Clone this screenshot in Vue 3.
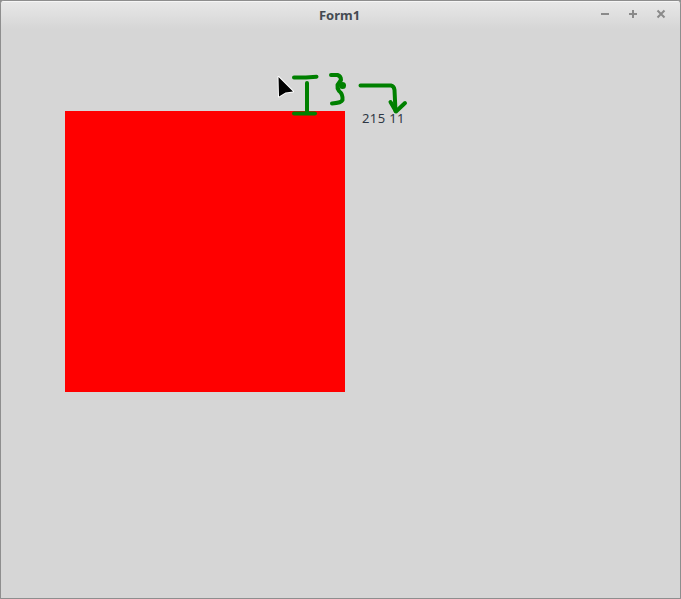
<script setup>
const title = 'Form1'
const coords = '215 11'
</script>

<template>
  <div class="window">
    <div class="titlebar">
      <span class="title">{{ title }}</span>
      <div class="controls">
        <svg class="ctl" viewBox="0 0 10 10"><path d="M1 5H9" /></svg>
        <svg class="ctl" viewBox="0 0 10 10"><path d="M1 5H9M5 1V9" /></svg>
        <svg class="ctl" viewBox="0 0 10 10"><path d="M1.5 1.5L8.5 8.5M8.5 1.5L1.5 8.5" /></svg>
      </div>
    </div>
    <div class="canvas">
      <div class="square"></div>
      <span class="coords">{{ coords }}</span>
      <svg class="marks" width="679" height="597" viewBox="1 1 679 597">
        <polygon class="cursor" points="278.5,77 293,91.5 285.5,92.5 279,96.5" />
        <g class="ink">
          <path d="M294 77.5L306 77.5L316.5 76.7" />
          <path d="M307 83V113" />
          <path d="M294 113.5H315" />
          <path d="M331 75H337.5Q341 76 341 80L337.5 85Q337 88 339 91Q343 94 342.5 100Q341 103 332 103.5" />
          <circle class="blob" cx="342.5" cy="85.5" r="3.5" />
          <path d="M360.5 85.5H391Q394 86 394.5 90L395.5 111" />
          <path d="M390.5 102L396 111.5L405 103" />
        </g>
      </svg>
    </div>
  </div>
</template>

<style>
html, body {
  margin: 0;
  background: #8f8f8f;
}
</style>

<style scoped>
.window {
  box-sizing: border-box;
  width: 681px;
  height: 599px;
  display: flex;
  flex-direction: column;
  border: 1px solid #8e8e8e;
  border-radius: 4px 4px 0 0;
  background: #d6d6d6;
  overflow: hidden;
  font-family: "Noto Sans", "Open Sans", sans-serif;
}

.titlebar {
  height: 28px;
  flex: none;
  display: flex;
  align-items: center;
  justify-content: center;
  position: relative;
  background: linear-gradient(#e8e8e8, #d6d6d6);
  box-shadow: inset 0 1px 0 #f6f6f6;
}

.title {
  font-size: 13px;
  font-weight: 700;
  color: #444a52;
  margin-right: 2px;
}

.controls {
  position: absolute;
  right: 14px;
  top: 8px;
  display: flex;
  gap: 18px;
}

.ctl {
  width: 10px;
  height: 10px;
  fill: none;
  stroke: #8a8a8a;
  stroke-width: 2;
}

.canvas {
  flex: 1;
  position: relative;
}

.square {
  width: 280px;
  height: 281px;
  margin: 82px 0 0 64px;
  background: #ff0000;
}

.coords {
  position: absolute;
  left: 361px;
  top: 81px;
  font-size: 13px;
  letter-spacing: 0.4px;
  line-height: 17px;
  color: #2f3744;
  white-space: nowrap;
}

.marks {
  position: absolute;
  left: 0;
  top: -28px;
}

.cursor {
  fill: #000;
  stroke: #fff;
  stroke-width: 2;
  paint-order: stroke;
  stroke-linejoin: round;
}

.ink {
  fill: none;
  stroke: #008000;
  stroke-width: 4;
  stroke-linecap: round;
  stroke-linejoin: round;
}

.blob {
  fill: #008000;
  stroke: none;
}
</style>
